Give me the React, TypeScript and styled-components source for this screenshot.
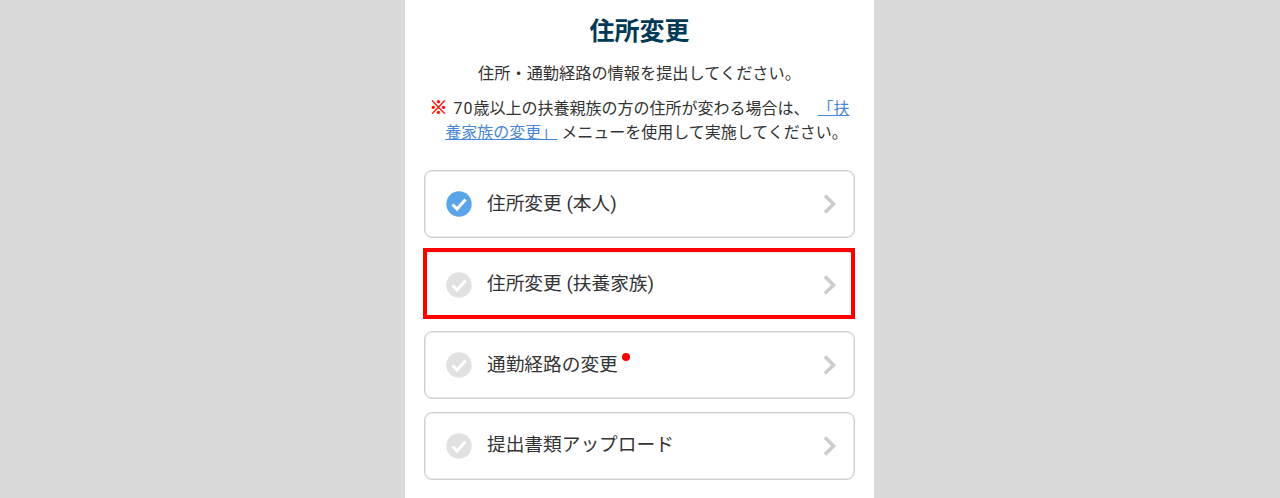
import React from 'react';
import styled, { createGlobalStyle } from 'styled-components';

const GlobalStyle = createGlobalStyle`
  html, body {
    margin: 0;
    padding: 0;
    height: 498px;
    overflow: hidden;
    background-color: #d9d9d9;
    font-family: 'Roboto', 'Noto Sans CJK JP', sans-serif;
  }
`;

const Panel = styled.div`
  box-sizing: border-box;
  width: 469px;
  height: 498px;
  margin-left: 405px;
  padding: 13px 19px 0;
  background-color: #ffffff;
  overflow: hidden;
`;

const Title = styled.h1`
  margin: 0;
  height: 37px;
  font-size: 25px;
  line-height: 37px;
  font-weight: 700;
  text-align: center;
  color: #003a57;
`;

const Lead = styled.p`
  margin: 12px 0 0;
  font-size: 16.2px;
  line-height: 24px;
  text-align: center;
  color: #333333;
`;

const Notice = styled.p`
  margin: 10px 0 0;
  font-size: 16px;
  line-height: 24px;
  text-align: center;
  color: #333333;
`;

const Mark = styled.span`
  color: #ff0000;
  font-size: 18px;
  font-weight: 700;
  -webkit-text-stroke: 0.5px #ff0000;
  margin-right: 6px;
`;

const Digits = styled.span`
  letter-spacing: 1px;
`;

const NoticeLink = styled.a`
  margin-left: 4px;
  color: #4a86d8;
  text-decoration: underline;
`;

const NoticeTail = styled.span`
  margin-right: -14px;
`;

const MenuList = styled.div`
  display: flex;
  flex-direction: column;
  gap: 12.5px;
  margin-top: 25px;
`;

const MenuCard = styled.div`
  position: relative;
  box-sizing: border-box;
  display: flex;
  align-items: center;
  width: 431px;
  height: 68px;
  padding: 0 17px 0 21px;
  border: 1px solid #cfcfcf;
  border-radius: 8px;
  box-shadow: inset 0 0 0 1px #e8e8e8;
  background-color: #ffffff;
`;

const Highlight = styled.div`
  position: absolute;
  top: -4px;
  left: -2px;
  right: -1px;
  bottom: -1px;
  border: 4px solid #ff0000;
`;

const MenuLabel = styled.span`
  position: relative;
  margin-left: 15px;
  font-size: 18.7px;
  line-height: 27px;
  color: #333333;
`;

const Dot = styled.span`
  position: absolute;
  top: 1px;
  right: -12px;
  width: 8px;
  height: 8px;
  border-radius: 50%;
  background-color: #ff0000;
`;

const Chevron = styled.svg`
  margin-left: auto;
`;

const CheckIcon: React.FC<{ done: boolean }> = ({ done }) => (
  <svg width="26" height="26" viewBox="0 0 26 26">
    <circle cx="13" cy="13" r="12.7" fill={done ? '#5aa5ea' : '#e1e1e1'} />
    <path
      d="M6.5 13.5 L11 18 L19.5 8.5"
      fill="none"
      stroke="#ffffff"
      strokeWidth="3"
    />
  </svg>
);

const items = [
  { label: '住所変更 (本人)', done: true },
  { label: '住所変更 (扶養家族)', highlighted: true },
  { label: '通勤経路の変更', badge: true },
  { label: '提出書類アップロード' },
];

const App: React.FC = () => (
  <>
    <GlobalStyle />
    <Panel>
      <Title>住所変更</Title>
      <Lead>住所・通勤経路の情報を提出してください。</Lead>
      <Notice>
        <Mark>※</Mark>
        <Digits>70</Digits>歳以上の扶養親族の方の住所が変わる場合は、{' '}
        <NoticeLink href="#">「扶養家族の変更」</NoticeLink>{' '}
        <NoticeTail>メニューを使用して実施してください。</NoticeTail>
      </Notice>
      <MenuList>
        {items.map((item) => (
          <MenuCard key={item.label}>
            <CheckIcon done={!!item.done} />
            <MenuLabel>
              {item.label}
              {item.badge && <Dot />}
            </MenuLabel>
            <Chevron width="14" height="22" viewBox="0 0 14 22">
              <path d="M2 2.5 L10.5 11 L2 19.5" fill="none" stroke="#cccccc" strokeWidth="3.6" />
            </Chevron>
            {item.highlighted && <Highlight />}
          </MenuCard>
        ))}
      </MenuList>
    </Panel>
  </>
);

export default App;
